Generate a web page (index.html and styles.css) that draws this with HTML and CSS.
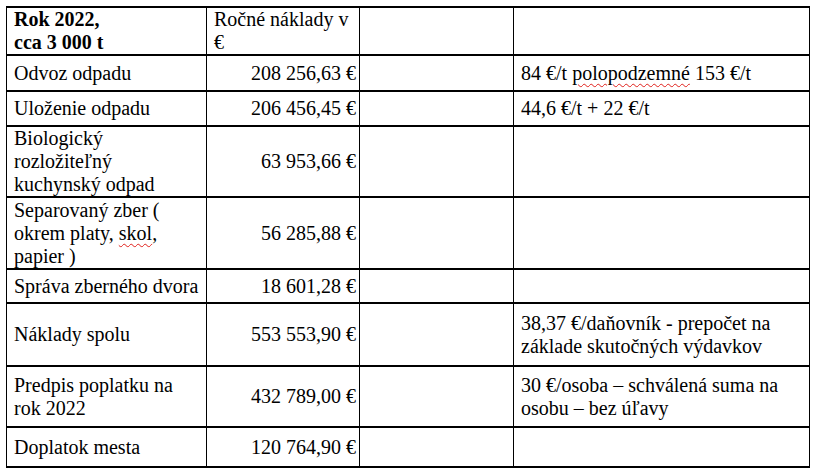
FILE: index.html
```html
<!DOCTYPE html>
<html lang="sk">
<head>
<meta charset="utf-8">
<title>Rok 2022</title>
<link rel="stylesheet" href="styles.css">
</head>
<body>
<table class="costs">
  <colgroup>
    <col class="c1"><col class="c2"><col class="c3"><col class="c4">
  </colgroup>
  <tr class="r-head">
    <td class="label bold">Rok 2022,<br>cca 3 000 t</td>
    <td class="label head2">Ročné náklady v<br>€</td>
    <td></td>
    <td></td>
  </tr>
  <tr class="r-36">
    <td class="label">Odvoz odpadu</td>
    <td class="num">208 256,63 €</td>
    <td></td>
    <td class="note">84 €/t <span class="spell">polopodzemné</span> 153 €/t</td>
  </tr>
  <tr class="r-35">
    <td class="label">Uloženie odpadu</td>
    <td class="num">206 456,45 €</td>
    <td></td>
    <td class="note">44,6 €/t + 22 €/t</td>
  </tr>
  <tr class="r-70">
    <td class="label">Biologický<br>rozložiteľný<br>kuchynský odpad</td>
    <td class="num">63 953,66 €</td>
    <td></td>
    <td></td>
  </tr>
  <tr class="r-72">
    <td class="label">Separovaný zber (<br>okrem platy, <span class="spell">skol</span>,<br>papier )</td>
    <td class="num">56 285,88 €</td>
    <td></td>
    <td></td>
  </tr>
  <tr class="r-34">
    <td class="label">Správa zberného dvora</td>
    <td class="num">18 601,28 €</td>
    <td></td>
    <td></td>
  </tr>
  <tr class="r-63">
    <td class="label">Náklady spolu</td>
    <td class="num">553 553,90 €</td>
    <td></td>
    <td class="note">38,37 €/daňovník - prepočet na<br>základe skutočných výdavkov</td>
  </tr>
  <tr class="r-61">
    <td class="label">Predpis poplatku na<br>rok 2022</td>
    <td class="num">432 789,00 €</td>
    <td></td>
    <td class="note">30 €/osoba – schválená suma na<br>osobu – bez úľavy</td>
  </tr>
  <tr class="r-40">
    <td class="label">Doplatok mesta</td>
    <td class="num">120 764,90 €</td>
    <td></td>
    <td></td>
  </tr>
</table>
</body>
</html>
```

FILE: styles.css
```css
html, body {
  margin: 0;
  padding: 0;
  background: #ffffff;
}

body {
  padding: 6px 0 0 6px;
  color: #000000;
}

.costs {
  border-collapse: collapse;
  table-layout: fixed;
  width: 803px;
  font-family: "Times New Roman", "Liberation Serif", "DejaVu Serif", serif;
  font-size: 20px;
}

.c1 { width: 200px; }
.c2 { width: 153px; }
.c3 { width: 154px; }
.c4 { width: 296px; }

.costs td {
  font-family: "Times New Roman", "Liberation Serif", "DejaVu Serif", serif;
  border-left: 1px solid #000;
  border-right: 1px solid #000;
  border-top: 2px solid #000;
  border-bottom: 2px solid #000;
  padding: 0 3px 0 7px;
  vertical-align: middle;
  line-height: 23px;
  white-space: nowrap;
}

.bold { font-weight: bold; }
.head2 { padding-left: 10px; }
.num { text-align: right; }
.note { padding-left: 8px; }

.spell {
  text-decoration: underline wavy #e0201b;
  text-decoration-thickness: 1px;
  text-underline-offset: 3px;
}

.r-head { height: 48px; }
.r-36 { height: 36px; }
.r-35 { height: 35px; }
.r-70 { height: 70px; }
.r-72 { height: 72px; }
.r-34 { height: 34px; }
.r-63 { height: 63px; }
.r-61 { height: 61px; }
.r-40 { height: 40px; }
```
